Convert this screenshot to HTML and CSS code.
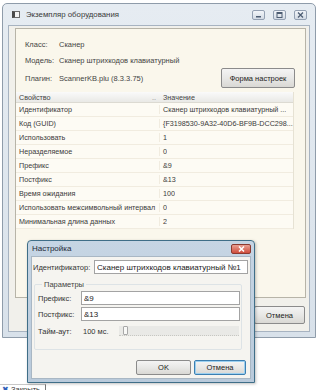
FILE: index.html
```html
<!DOCTYPE html>
<html lang="ru">
<head>
    <meta charset="UTF-8">
    <title>Экземпляр оборудования</title>
    <link rel="stylesheet" href="styles.css">
</head>
<body>
<div class="desk">
    <div class="window">
        <div class="titlebar">
            <span class="app-icon"></span>
            <span class="title">Экземпляр оборудования</span>
            <div class="controls">
                <span class="ctl"><svg width="7" height="6" viewBox="0 0 7 6"><rect x="1" y="4" width="5" height="1.5" fill="#4d5d73"/></svg></span>
                <span class="ctl"><svg width="7" height="6" viewBox="0 0 7 6"><rect x="1" y="0.5" width="5" height="5" fill="none" stroke="#4d5d73"/><rect x="1" y="0.5" width="5" height="1.5" fill="#4d5d73"/></svg></span>
                <span class="ctl"><svg width="7" height="6" viewBox="0 0 7 6"><path d="M1 0.5 L6 5.5 M6 0.5 L1 5.5" stroke="#4d5d73" stroke-width="1.3"/></svg></span>
            </div>
        </div>
        <div class="client">
            <div class="panel">
                <div class="info">
                    <div class="info-row"><span class="info-label">Класс:</span><span>Сканер</span></div>
                    <div class="info-row"><span class="info-label">Модель:</span><span>Сканер штрихкодов клавиатурный</span></div>
                    <div class="info-row plugin">
                        <span class="info-label">Плагин:</span><span>ScannerKB.plu (8.3.3.75)</span>
                        <button class="btn settings-btn">Форма настроек</button>
                    </div>
                </div>
                <div class="props">
                    <div class="props-head">
                        <span class="cell name">Свойство<span class="grip">..</span></span>
                        <span class="cell">Значение</span>
                    </div>
                    <div class="props-row"><span class="cell name">Идентификатор</span><span class="cell">Сканер штрихкодов клавиатурный ...</span></div>
                    <div class="props-row"><span class="cell name">Код (GUID)</span><span class="cell">{F3198530-9A32-40D6-BF9B-DCC298...</span></div>
                    <div class="props-row"><span class="cell name">Использовать</span><span class="cell">1</span></div>
                    <div class="props-row"><span class="cell name">Неразделяемое</span><span class="cell">0</span></div>
                    <div class="props-row"><span class="cell name">Префикс</span><span class="cell">&amp;9</span></div>
                    <div class="props-row"><span class="cell name">Постфикс</span><span class="cell">&amp;13</span></div>
                    <div class="props-row"><span class="cell name">Время ожидания</span><span class="cell">100</span></div>
                    <div class="props-row"><span class="cell name">Использовать межсимвольный интервал</span><span class="cell">0</span></div>
                    <div class="props-row"><span class="cell name">Минимальная длина данных</span><span class="cell">2</span></div>
                </div>
            </div>
            <div class="footer">
                <button class="btn cancel-main">Отмена</button>
            </div>
        </div>
    </div>

    <div class="under-tab"><span class="x-icon">✖</span> Закрыть</div>

    <div class="dialog">
        <div class="dlg-title">
            <span>Настройка</span>
            <span class="dlg-close"><svg width="7" height="6" viewBox="0 0 7 6"><path d="M1 0.5 L6 5.5 M6 0.5 L1 5.5" stroke="#fff" stroke-width="1.5"/></svg></span>
        </div>
        <div class="dlg-body">
            <div class="field-row ident">
                <span class="ident-label">Идентификатор:</span>
                <input class="text-input ident-input" type="text" value="Сканер штрихкодов клавиатурный №1">
            </div>
            <fieldset class="params">
                <legend>Параметры</legend>
                <div class="field-row">
                    <span class="param-label">Префикс:</span>
                    <input class="text-input param-input" type="text" value="&amp;9">
                </div>
                <div class="field-row">
                    <span class="param-label">Постфикс:</span>
                    <input class="text-input param-input" type="text" value="&amp;13">
                </div>
                <div class="field-row timeout">
                    <span class="param-label">Тайм-аут:</span>
                    <span class="timeout-value">100 мс.</span>
                    <div class="slider">
                        <span class="thumb"></span>
                    </div>
                </div>
            </fieldset>
            <div class="dlg-buttons">
                <button class="btn dlg-btn">OK</button>
                <button class="btn dlg-btn focused">Отмена</button>
            </div>
        </div>
    </div>
</div>
</body>
</html>
```

FILE: styles.css
```css
* {
    box-sizing: border-box;
}
body {
    margin: 0;
    background-color: #ffffff;
    font-family: "Liberation Sans", Arial, sans-serif;
    font-size: 7.5px;
    color: #2a2a2a;
}
.desk {
    position: relative;
    width: 316px;
    height: 390px;
    overflow: hidden;
}

/* main window */
.window {
    margin: 3px 0 0 2px;
    width: 314px;
    height: 335px;
    background: linear-gradient(#e6ecf2, #d8e1ea);
    border: 1px solid #8f9caa;
    border-radius: 5px 5px 0 0;
    padding: 0 5px 5px 5px;
    display: flex;
    flex-direction: column;
}
.titlebar {
    height: 21px;
    display: flex;
    align-items: center;
}
.app-icon {
    width: 8px;
    height: 7px;
    margin-left: 4px;
    border: 1px solid #6b6b6b;
    border-left: 3px solid #4a4a4a;
    background-color: #f4f4f4;
}
.title {
    margin-left: 6px;
    font-size: 7.8px;
    color: #3a3a3a;
}
.controls {
    margin-left: auto;
    margin-right: 3px;
    display: flex;
    gap: 8px;
}
.ctl {
    width: 13px;
    height: 10px;
    border: 1px solid #93a0b2;
    border-radius: 2px;
    background: linear-gradient(#f2f5f9, #d2dae4);
    display: flex;
    align-items: center;
    justify-content: center;
}
.client {
    flex: 1;
    background-color: #f1f0eb;
    border: 1px solid #a7b3c1;
    padding: 2px 3px 0 6px;
    display: flex;
    flex-direction: column;
}
.panel {
    height: 270px;
    background-color: #faf7ec;
    border: 1px solid #b7b4a8;
}
.info {
    padding: 7px 0 0 9px;
}
.info-row {
    display: flex;
    align-items: center;
    height: 16px;
    color: #444;
}
.info-label {
    width: 34px;
}
.info-row.plugin {
    height: 20px;
}
.btn {
    font-family: "Liberation Sans", Arial, sans-serif;
    font-size: 7.5px;
    color: #222;
    border: 1px solid #8b8b8b;
    border-radius: 2px;
    background: linear-gradient(#f4f4f4 0%, #e8e8e6 50%, #d9d8d4 100%);
    padding: 0;
}
.settings-btn {
    margin-left: auto;
    margin-right: 10px;
    width: 74px;
    height: 20px;
}

/* property list */
.props {
    margin-top: 4px;
    width: 278px;
    background-color: #fdfbf4;
    border-right: 1px solid #e6e2d4;
    font-size: 7.2px;
}
.props-head {
    display: flex;
    height: 11px;
    align-items: center;
    background: linear-gradient(#fafafa, #e9e9e6);
    border-bottom: 1px solid #dcdad2;
    color: #444;
}
.props-row {
    display: flex;
    height: 14px;
    align-items: center;
    border-bottom: 1px solid #f1ece0;
    color: #3a3a3a;
}
.cell {
    padding-left: 3px;
    white-space: nowrap;
    overflow: hidden;
    min-width: 0;
}
.cell.name {
    width: 144px;
    flex-shrink: 0;
    display: flex;
    border-right: 1px solid #f1ece0;
}
.props-head .cell.name {
    border-right: none;
}
.grip {
    margin-left: auto;
    margin-right: 4px;
    color: #888;
}
.footer {
    display: flex;
    justify-content: flex-end;
    margin-top: 8px;
    padding-right: 1px;
}
.cancel-main {
    width: 51px;
    height: 18px;
}

/* stuff below the window */
.under-tab {
    margin-top: 46px;
    width: 46px;
    height: 10px;
    border-right: 1px solid #777;
    border-top: 1px solid #c8c8c8;
    padding-left: 2px;
    color: #333;
    white-space: nowrap;
}
.x-icon {
    color: #2d5fb8;
}

/* settings dialog */
.dialog {
    position: absolute;
    left: 27px;
    top: 240px;
    width: 228px;
    height: 143px;
    border: 1px solid #3f6e88;
    border-radius: 4px 4px 0 0;
    background: linear-gradient(#c6d5e4, #b9cadb);
    padding: 0 3px 3px 3px;
    display: flex;
    flex-direction: column;
    box-shadow: 1px 1px 3px rgba(0, 0, 0, 0.25);
}
.dlg-title {
    height: 15px;
    display: flex;
    align-items: center;
    padding-left: 1px;
    font-size: 8px;
    color: #1e2a38;
}
.dlg-close {
    margin-left: auto;
    width: 20px;
    height: 10px;
    border: 1px solid #8c3a30;
    border-radius: 2px;
    background: linear-gradient(#e9a093, #cf4d3c);
    display: flex;
    align-items: center;
    justify-content: center;
}
.dlg-body {
    flex: 1;
    background-color: #f5f4f0;
    border: 1px solid #a9b7c4;
    padding: 3px 2px 0 1px;
    display: flex;
    flex-direction: column;
}
.field-row {
    display: flex;
    align-items: center;
    color: #333;
}
.ident-label {
    width: 61px;
}
.text-input {
    height: 14px;
    border: 1px solid #a3a3a3;
    background-color: #ffffff;
    font-family: "Liberation Sans", Arial, sans-serif;
    font-size: 8px;
    color: #222;
    padding: 0 2px;
}
.ident-input {
    flex: 1;
}
.params {
    margin: 6px 6px 0 1px;
    padding: 2px 1px 12px 3px;
    border: 1px solid #dde3e6;
    border-radius: 2px;
    display: flex;
    flex-direction: column;
    gap: 2px;
}
.params legend {
    margin-left: 4px;
    padding: 0 2px;
    color: #444;
}
.param-label {
    width: 43px;
}
.param-input {
    flex: 1;
}
.timeout {
    margin-top: 2px;
    height: 12px;
}
.timeout-value {
    width: 38px;
    padding-left: 2px;
}
.slider {
    width: 120px;
    height: 10px;
    background-color: #e9e9e6;
    border-bottom: 1px dotted #c7c7c2;
    display: flex;
    align-items: center;
    padding-left: 4px;
}
.thumb {
    width: 5px;
    height: 9px;
    border: 1px solid #a8a8a8;
    border-radius: 1px;
    background-color: #f8f8f6;
}
.dlg-buttons {
    display: flex;
    justify-content: flex-end;
    gap: 3px;
    margin-top: 10px;
    padding-right: 2px;
}
.dlg-btn {
    height: 15px;
    width: 55px;
}
.dlg-btn.focused {
    width: 52px;
    border-color: #3c7fb1;
    box-shadow: inset 0 0 0 1px #9cd0f0;
}
```
